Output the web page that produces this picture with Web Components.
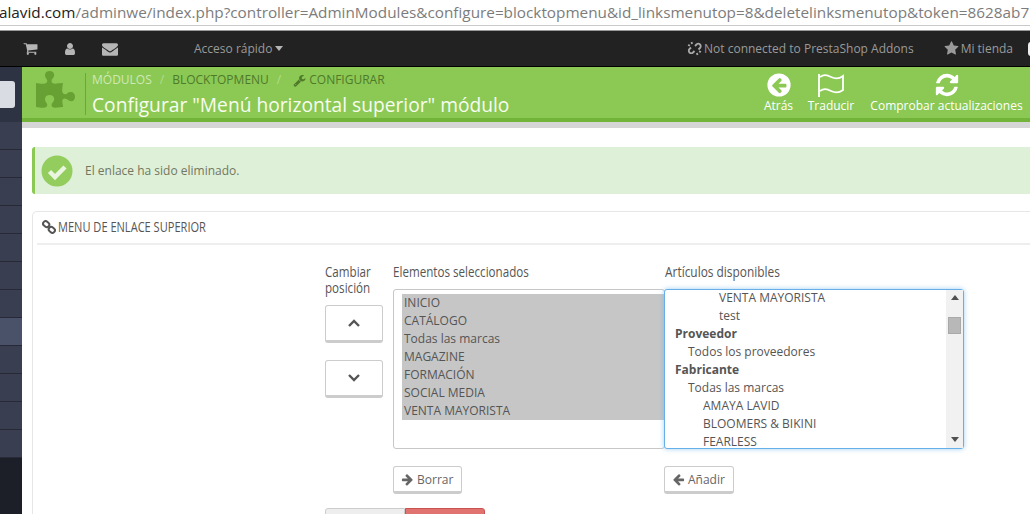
<!DOCTYPE html>
<html lang="es">
<head>
<meta charset="utf-8">
<title>Configurar módulo</title>
<style>
  html, body { margin: 0; height: 514px; overflow: hidden; background: #fff; }
  body { font-family: "Open Sans", "Liberation Sans", sans-serif; font-size: 12px; color: #555; }
  .shell { display: flex; }
  .content { flex: 1; min-width: 0; }
</style>
</head>
<body>
<browser-url></browser-url>
<top-bar></top-bar>
<div class="shell">
  <side-menu></side-menu>
  <div class="content">
    <page-head></page-head>
    <alert-box>El enlace ha sido eliminado.</alert-box>
    <config-panel></config-panel>
  </div>
</div>

<script>
const ICONS = {
  cart: "M704 1536q0 52-38 90t-90 38-90-38-38-90 38-90 90-38 90 38 38 90zm896 0q0 52-38 90t-90 38-90-38-38-90 38-90 90-38 90 38 38 90zm128-1088v512q0 24-16.5 42.5t-40.5 21.5l-1044 122q13 60 13 70 0 16-24 64h920q26 0 45 19t19 45-19 45-45 19h-1024q-26 0-45-19t-19-45q0-11 8-31.5t16-36 21.5-40 15.5-29.5l-177-823h-204q-26 0-45-19t-19-45 19-45 45-19h256q16 0 28.5 6.5t19.5 15.5 13 24.5 8 26 5.5 29.5 4.5 26h1201q26 0 45 19t19 45z",
  user: "M1536 1399q0 109-62.5 187t-150.5 78h-854q-88 0-150.5-78t-62.5-187q0-85 8.5-160.5t31.5-152 58.5-131 94-89 134.5-34.5q131 128 313 128t313-128q76 0 134.5 34.5t94 89 58.5 131 31.5 152 8.5 160.5zm-256-887q0 159-112.5 271.5t-271.5 112.5-271.5-112.5-112.5-271.5 112.5-271.5 271.5-112.5 271.5 112.5 112.5 271.5z",
  envelope: "M1792 710v794q0 66-47 113t-113 47h-1472q-66 0-113-47t-47-113v-794q44 49 101 87 362 246 497 345 57 42 92.5 65.5t94.5 48 110 24.5h2q51 0 110-24.5t94.5-48 92.5-65.5q170-123 498-345 57-39 100-87zm0-294q0 79-49 151t-122 123q-376 261-468 325-10 7-42.5 30.5t-54 38-52 32.5-57.5 27-50 9h-2q-23 0-50-9t-57.5-27-52-32.5-54-38-42.5-30.5q-91-64-262-182.5t-205-142.5q-62-42-117-115.5t-55-136.5q0-78 41.5-130t118.5-52h1472q65 0 112.5 47t47.5 113z",
  star: "M1728 647q0 22-26 48l-363 354 86 500q1 7 1 20 0 21-10.5 35.5t-30.5 14.5q-19 0-40-12l-449-236-449 236q-22 12-40 12-21 0-31.5-14.5t-10.5-35.5q0-6 2-20l86-500-364-354q-25-27-25-48 0-37 56-46l502-73 225-455q19-41 49-41t49 41l225 455 502 73q56 9 56 46z",
  puzzle: "M1664 1098q0 81-44.5 135t-123.5 54q-41 0-77.5-17.5t-59-38-56.5-38-71-17.5q-110 0-110 124 0 39 16 115t15 115v5q-22 0-33 1-34 3-97.5 11.5t-115.5 13.5-98 5q-61 0-103-26.5t-42-83.5q0-37 17.5-71t38-56.5 38-59 17.5-77.5q0-79-54-123.5t-135-44.5q-84 0-143 45.5t-59 127.5q0 43 15 83t33.5 64.5 33.5 53 15 50.5q0 45-46 89-37 35-117 35-95 0-245-24-9-2-27.5-4t-27.5-4l-13-2q-1 0-3-1-2 0-2-1v-1024q2 1 17.5 3.5t34 5 21.5 3.5q150 24 245 24 80 0 117-35 46-44 46-89 0-22-15-50.5t-33.5-53-33.5-64.5-15-83q0-82 59-127.5t144-45.5q80 0 134 44.5t54 123.5q0 41-17.5 77.5t-38 59-38 56.5-17.5 71q0 57 42 83.5t103 26.5q64 0 180-15t163-17v2q-1 2-3.5 17.5t-5 34-3.5 21.5q-24 150-24 245 0 80 35 117 44 46 89 46 22 0 50.5-15t53-33.5 64.5-33.5 83-15q82 0 127.5 59t45.5 143z",
  wrench: "M448 1472q0-26-19-45t-45-19-45 19-19 45 19 45 45 19 45-19 19-45zm644-420l-682 682q-37 37-90 37-52 0-91-37l-106-108q-38-36-38-90 0-53 38-91l681-681q39 98 114.5 173.5t173.5 114.5zm634-435q0 39-23 106-47 134-164.5 217.5t-258.5 83.5q-185 0-316.5-131.5t-131.5-316.5 131.5-316.5 316.5-131.5q58 0 121.5 16.5t107.5 46.5q16 11 16 28t-16 28l-293 169v224l193 107q5-3 79-48.5t135.5-81 70.5-35.5q15 0 23.5 10t8.5 25z",
  refresh: "M1639 1056q0 5-1 7-64 268-268 434.5t-478 166.5q-146 0-282.5-55t-243.5-157l-129 129q-19 19-45 19t-45-19-19-45v-448q0-26 19-45t45-19h448q26 0 45 19t19 45-19 45l-137 137q71 66 161 102t187 36q134 0 250-65t186-179q11-17 53-117 8-23 30-23h192q13 0 22.5 9.5t9.5 22.5zm25-800v448q0 26-19 45t-45 19h-448q-26 0-45-19t-19-45 19-45l138-138q-148-137-349-137-134 0-250 65t-186 179q-11 17-53 117-8 23-30 23h-199q-13 0-22.5-9.5t-9.5-22.5v-7q65-268 270-434.5t480-166.5q146 0 284 55.5t245 156.5l130-129q19-19 45-19t45 19 19 45z",
  right: "M1600 960q0 54-37 91l-651 651q-39 37-91 37-51 0-90-37l-75-75q-38-38-38-91t38-91l293-293h-704q-52 0-84.5-37.5t-32.5-90.5v-128q0-53 32.5-90.5t84.5-37.5h704l-293-294q-38-36-38-90t38-90l75-75q38-38 90-38 53 0 91 38l651 651q37 35 37 90z",
  left: "M1664 896v128q0 53-32.5 90.5t-84.5 37.5h-704l293 294q38 36 38 90t-38 90l-75 76q-37 37-90 37-52 0-91-37l-651-652q-37-37-37-90 0-52 37-91l651-650q38-38 91-38 52 0 90 38l75 74q38 38 38 91t-38 91l-293 293h704q52 0 84.5 37.5t32.5 90.5z"
};

class UiIcon extends HTMLElement {
  connectedCallback() {
    const size = this.getAttribute("size") || 14;
    this.attachShadow({ mode: "open" }).innerHTML = `
      <style>:host { display: inline-flex; flex: none; line-height: 0; } svg { fill: currentColor; }</style>
      <svg width="${size}" height="${size}" viewBox="0 0 1792 1792"><path d="${ICONS[this.getAttribute("name")]}"/></svg>`;
  }
}
customElements.define("ui-icon", UiIcon);

class BrowserUrl extends HTMLElement {
  constructor() {
    super();
    this.attachShadow({ mode: "open" }).innerHTML = `
      <style>
        :host { display: block; height: 31px; box-sizing: border-box; background: #fff; border-bottom: 1px solid #999; overflow: hidden; }
        .bar { height: 25px; border-bottom: 1px solid #c9c9c9; white-space: nowrap; overflow: hidden;
               font: 15.3px/25px "Open Sans", sans-serif; color: #7c7c7c; text-indent: -1px; }
        b { font-weight: 400; color: #222; }
      </style>
      <div class="bar"><b>alavid.com</b>/adminwe/index.php?controller=AdminModules&amp;configure=blocktopmenu&amp;id_linksmenutop=8&amp;deletelinksmenutop&amp;token=8628ab7</div>`;
  }
}
customElements.define("browser-url", BrowserUrl);

class TopBar extends HTMLElement {
  constructor() {
    super();
    this.attachShadow({ mode: "open" }).innerHTML = `
      <style>
        :host { display: flex; align-items: center; height: 36px; box-sizing: border-box; background: #222; border-bottom: 1px solid #000;
                color: #9a9a9a; font: 12px "Open Sans", sans-serif; position: relative; overflow: hidden; }
        .icons { display: flex; align-items: center; padding-left: 23px; width: 194px; gap: 25px; color: #b5b5b5; box-sizing: border-box; }
        .quick { display: flex; align-items: center; gap: 3px; }
        .caret { width: 0; height: 0; border: 4.5px solid transparent; border-top: 5px solid #b5b5b5; border-bottom: 0; }
        .right { margin-left: auto; display: flex; align-items: center; }
        .addons { display: flex; align-items: center; gap: 2px; margin-right: 30px; }
        .shop { display: flex; align-items: center; gap: 2px; margin-right: 15px; }
        .pill { width: 3px; height: 14px; background: #eee; border-radius: 3px 0 0 3px; margin-right: -1px; }
        svg.unlink { fill: none; stroke: #a8a8a8; stroke-width: 1.8; }
      </style>
      <div class="icons">
        <ui-icon name="cart" size="15"></ui-icon>
        <ui-icon name="user" size="14"></ui-icon>
        <ui-icon name="envelope" size="16"></ui-icon>
      </div>
      <div class="quick">Acceso rápido <span class="caret"></span></div>
      <div class="right">
        <div class="addons">
          <svg class="unlink" width="15" height="15" viewBox="0 0 15 15"><path d="M4 6.500 2.500 8a2.300 2.300 0 0 0 3.500 3.500L7.500 10M8 5 9.500 3.500a2.300 2.300 0 0 1 3.500 3.500L11.500 8.500M1 4l2 .7M4.500 1l.6 2M14 11l-2-.7M10.500 14l-.6-2"/></svg>
          <span>Not connected to PrestaShop Addons</span>
        </div>
        <div class="shop"><ui-icon name="star" size="15"></ui-icon><span>Mi tienda</span></div>
        <div class="pill"></div>
      </div>`;
  }
}
customElements.define("top-bar", TopBar);

class SideMenu extends HTMLElement {
  constructor() {
    super();
    const rows = [0, 1, 2, 3, 4, 5, 6, 7, 8, 9, 10, 11].map(i => `<div class="row${i === 7 ? " on" : ""}"></div>`).join("");
    this.attachShadow({ mode: "open" }).innerHTML = `
      <style>
        :host { display: block; width: 22px; flex: none; background: #1c1f27; height: 447px; }
        .head { height: 55px; box-sizing: border-box; background: #2e3343; padding-top: 14px; }
        .search { width: 15px; height: 27px; background: #d9dce3; border-radius: 0 3px 3px 0; }
        .row { height: 27px; background: #393e50; border-bottom: 1px solid #272a36; }
        .row.on { background: #4a5269; }
      </style>
      <div class="head"><div class="search"></div></div>
      ${rows}`;
  }
}
customElements.define("side-menu", SideMenu);

class PageHead extends HTMLElement {
  constructor() {
    super();
    this.attachShadow({ mode: "open" }).innerHTML = `
      <style>
        :host { display: block; font-family: "Open Sans", sans-serif; }
        .green { display: flex; height: 51px; background: #8bc954; border-bottom: 4px solid #72b43a; box-sizing: content-box; }
        .logo { color: #67a133; width: 40px; margin: 4px 9px 0 14px; }
        .titles { border-left: 1px solid #6ea53c; margin-top: 6px; height: 42px; padding-left: 6px; white-space: nowrap; }
        .crumbs { display: flex; align-items: center; font-size: 12px; line-height: 14px; margin-top: 0; color: #4f7a2a; }
        .crumbs span.first { color: #cfe8b4; }
        .crumbs i { font-style: normal; margin: 0 8px; color: #b4dc8c; }
        .crumbs ui-icon { margin: 0 3px 0 4px; }
        h2 { margin: 6px 0 0; font-size: 19.2px; line-height: 24px; font-weight: 400; color: #f8fcf0; }
        .tools { margin-left: auto; display: flex; color: #fff; font-size: 12px; }
        .tool { display: flex; flex-direction: column; align-items: center; padding-top: 5px; white-space: nowrap; }
        .tool svg, .tool ui-icon { height: 26px; }
        .tool span { line-height: 14px; margin-top: 1px; }
        .strip { height: 6px; background: #d6d6d6; }
      </style>
      <div class="green">
        <div class="logo"><ui-icon name="puzzle" size="42"></ui-icon></div>
        <div class="titles">
          <div class="crumbs"><span class="first">MÓDULOS</span><i>/</i><span>BLOCKTOPMENU</span><i>/</i><ui-icon name="wrench" size="13"></ui-icon><span>CONFIGURAR</span></div>
          <h2>Configurar "Menú horizontal superior" módulo</h2>
        </div>
        <div class="tools">
          <div class="tool" style="width:39px;margin-right:9px">
            <svg width="26" height="26" viewBox="0 0 1792 1792"><circle cx="896" cy="896" r="800" fill="#fff"/><path fill="#8bc954" transform="translate(296 296) scale(.67)" d="${ICONS.left}"/></svg>
            <span>Atrás</span>
          </div>
          <div class="tool" style="width:48px;margin-right:15px">
            <svg width="30" height="26" viewBox="0 0 30 26" fill="none" stroke="#fff" stroke-width="1.8"><path d="M3 2v23M4 5c4-3 7-2 11 0s8 2 12-1v14c-4 3-8 3-12 1s-7-3-11 0"/></svg>
            <span>Traducir</span>
          </div>
          <div class="tool" style="width:153px;margin-right:7px">
            <ui-icon name="refresh" size="26"></ui-icon>
            <span>Comprobar actualizaciones</span>
          </div>
        </div>
      </div>
      <div class="strip"></div>`;
  }
}
customElements.define("page-head", PageHead);

class AlertBox extends HTMLElement {
  constructor() {
    super();
    this.attachShadow({ mode: "open" }).innerHTML = `
      <style>
        :host { display: flex; align-items: center; gap: 12px; height: 47px; box-sizing: border-box; margin: 19px -6px 0 10px;
                padding-left: 6px; background: #dff0d9; border-left: 3px solid #8bc954; border-radius: 3px 0 0 3px;
                color: #72775f; font: 12px "Open Sans", sans-serif; }
        svg { flex: none; }
      </style>
      <svg width="32" height="32" viewBox="0 0 32 32"><circle cx="16" cy="16" r="15.500" fill="#92cd5d"/><path d="M8.500 16.500 14 22 24 12" fill="none" stroke="#e9f5de" stroke-width="4.500"/></svg>
      <slot></slot>`;
  }
}
customElements.define("alert-box", AlertBox);

class ListBox extends HTMLElement {
  constructor() {
    super();
    this.attachShadow({ mode: "open" }).innerHTML = `
      <style>
        :host { display: block; box-sizing: border-box; height: 160px; background: #fff; overflow: hidden; position: relative;
                border: 1px solid #c7c7c7; border-radius: 3px; font: 12px/18px "Open Sans", sans-serif; color: #555; }
        :host([focus]) { border-color: #66afe9; box-shadow: 0 0 5px rgba(102,175,233,.6); overflow: visible; }
        .wrap { height: 158px; overflow: hidden; }
        ::slotted(div) { white-space: nowrap; height: 18px; }
        .bar { position: absolute; right: 0; top: 0; bottom: 0; width: 17px; background: #f1f1f1; }
        .thumb { position: absolute; left: 2px; right: 2px; top: 27px; height: 17px; background: #b8b8b8; border: 1px solid #a9a9a9; box-sizing: border-box; }
        .up, .down { position: absolute; left: 5px; width: 0; height: 0; border: 4px solid transparent; }
        .up { top: 5px; border-bottom: 5px solid #505050; border-top: 0; }
        .down { bottom: 6px; border-top: 5px solid #505050; border-bottom: 0; }
      </style>
      <div class="wrap"><slot></slot></div>
      ${this.hasAttribute("focus") ? '<div class="bar"><div class="up"></div><div class="thumb"></div><div class="down"></div></div>' : ""}`;
  }
}
customElements.define("list-box", ListBox);

class UiBtn extends HTMLElement {
  constructor() {
    super();
    this.attachShadow({ mode: "open" }).innerHTML = `
      <style>
        :host { display: inline-flex; align-items: center; justify-content: center; gap: 3px; box-sizing: border-box; height: 28px; padding: 0 8px 0 7px;
                background: #fff; border: 1px solid #ccc; border-bottom: 3px solid #ccc; border-radius: 3px; color: #666; font: 12px "Open Sans", sans-serif; }
      </style>
      <slot></slot>`;
  }
}
customElements.define("ui-btn", UiBtn);

class ConfigPanel extends HTMLElement {
  constructor() {
    super();
    this.attachShadow({ mode: "open" }).innerHTML = `
      <style>
        :host { display: block; margin: 17px -6px 0 10px; border: 1px solid #e6e6e6; border-right: 0; border-radius: 5px 0 0 0; padding: 0 0 0 4px; height: 320px; overflow: hidden; box-sizing: border-box; }
        .title { display: flex; align-items: center; gap: 2px; height: 33px; padding-bottom: 2px; box-sizing: border-box; border-bottom: 2px solid #eee; padding-left: 5px; color: #555; }
        .title svg { flex: none; }
        .title span { display: inline-block; font: 14px/16px "Open Sans", sans-serif; white-space: nowrap; transform: scaleX(.79); transform-origin: 0 50%; }
        .form { display: grid; grid-template-columns: 68px 271px 300px; margin: 18px 0 0 288px; }
        .lbl { font: 14px/16px "Open Sans", sans-serif; color: #555; transform: scaleX(.83); transform-origin: 0 0; white-space: nowrap; }
        .cols { display: flex; flex-direction: column; }
        .cols .lbl { height: 25px; margin-top: 1px; }
        .cols .lbl.two { height: 41px; white-space: normal; width: 60px; }
        .cols .lbl.avail { transform: translateX(1px) scaleX(.85); }
        .move { width: 58px; height: 38px; padding: 0; }
        .move + .move { margin-top: 17px; }
        .sel { padding: 4px 0 0 8px; width: 272px; }
        .sel div { background: #c6c6c6; padding-left: 2px; }
        .a { padding-left: 10px; } .b { padding-left: 23px; } .c { padding-left: 38px; } .d { padding-left: 54px; }
        .foot { margin-top: 17px; }
        .send { display: flex; margin: 14px 0 0 288px; }
        .send div { width: 80px; height: 12px; box-sizing: border-box; border-radius: 3px 0 0 0; background: #eee; border: 1px solid #ccc; }
        .send div + div { background: #e0736f; border-color: #c9534f; border-radius: 0 3px 0 0; }
        strong { font-weight: 700; }
        .top { margin-top: -1px; }
        .focus { position: relative; z-index: 1; }
      </style>
      <div class="title">
        <svg width="14" height="14" viewBox="0 0 14 14" fill="none" stroke="#555" stroke-width="2"><rect x="1" y="1.500" width="6.500" height="5" rx="2.500" transform="rotate(40 4 4)"/><rect x="6.500" y="7.500" width="6.500" height="5" rx="2.500" transform="rotate(40 10 10)"/></svg>
        <span>MENU DE ENLACE SUPERIOR</span>
      </div>
      <div class="form">
        <div class="cols">
          <div class="lbl two">Cambiar posición</div>
          <ui-btn class="move"><svg width="12" height="8" viewBox="0 0 12 8" fill="none" stroke="#555" stroke-width="2.400"><path d="M1 7l5-5 5 5"/></svg></ui-btn>
          <ui-btn class="move"><svg width="12" height="8" viewBox="0 0 12 8" fill="none" stroke="#555" stroke-width="2.400"><path d="M1 1l5 5 5-5"/></svg></ui-btn>
        </div>
        <div class="cols">
          <div class="lbl">Elementos seleccionados</div>
          <list-box class="sel">
            <div>INICIO</div><div>CATÁLOGO</div><div>Todas las marcas</div><div>MAGAZINE</div><div>FORMACIÓN</div><div>SOCIAL MEDIA</div><div>VENTA MAYORISTA</div>
          </list-box>
          <div class="foot"><ui-btn><ui-icon name="right" size="13"></ui-icon>Borrar</ui-btn></div>
        </div>
        <div class="cols focus">
          <div class="lbl avail">Artículos disponibles</div>
          <list-box focus>
            <div class="d top">VENTA MAYORISTA</div><div class="d">test</div>
            <div class="a"><strong>Proveedor</strong></div><div class="b">Todos los proveedores</div>
            <div class="a"><strong>Fabricante</strong></div><div class="b">Todas las marcas</div>
            <div class="c">AMAYA LAVID</div><div class="c">BLOOMERS &amp; BIKINI</div><div class="c">FEARLESS</div>
          </list-box>
          <div class="foot"><ui-btn><ui-icon name="left" size="13"></ui-icon>Añadir</ui-btn></div>
        </div>
      </div>
      <div class="send"><div></div><div></div></div>`;
  }
}
customElements.define("config-panel", ConfigPanel);
</script>
</body>
</html>
